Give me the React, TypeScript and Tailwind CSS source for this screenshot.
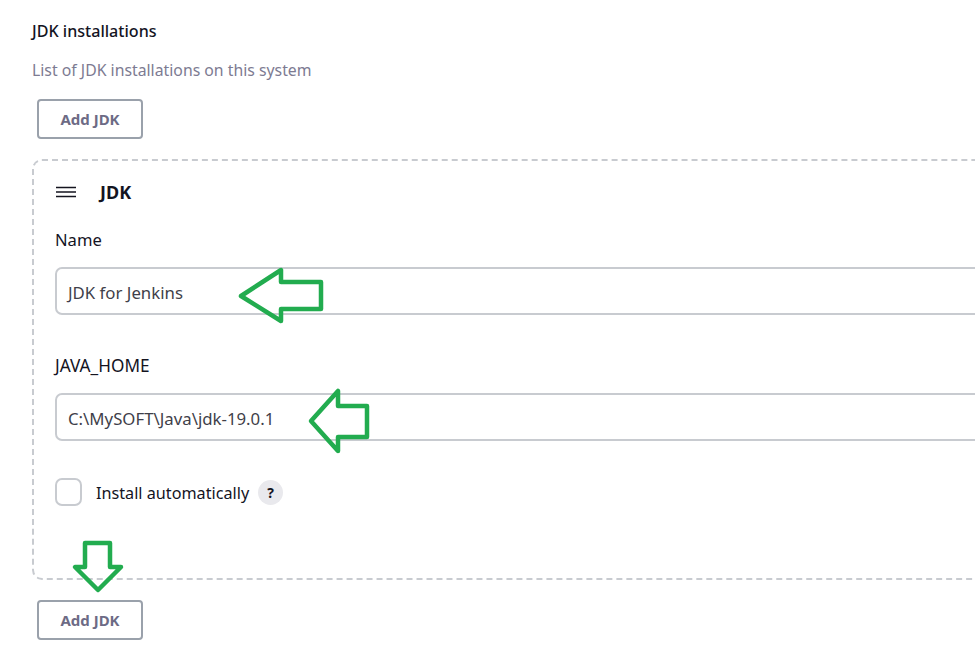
function AddButton() {
  return (
    <button className="ml-[5px] flex h-[40px] w-[106px] items-center justify-center rounded-[4px] border-2 border-[#9aa1ab] bg-white text-[15px] font-bold text-[#6d6b85]">
      Add JDK
    </button>
  );
}

function Field({ label, value, className, labelClass }: { label: string; value: string; className: string; labelClass: string }) {
  return (
    <div className={className}>
      <div className={labelClass}>{label}</div>
      <div className="mt-[15px] flex h-[48px] w-[1000px] items-center rounded-[7px] border-2 border-[#c8cbd0] bg-white pl-[11px] pt-[3px] text-[16.8px] text-[#3f3f4a]">
        {value}
      </div>
    </div>
  );
}

function Arrows() {
  const common = { fill: "none", stroke: "#22ac4f", strokeWidth: 4.5, strokeLinejoin: "round" as const };
  return (
    <svg className="absolute left-0 top-0 h-[668px] w-[975px]" viewBox="0 0 975 668">
      <polygon {...common} points="241,296 281,270 281,282 321,282 321,309 281,309 281,321" />
      <polygon {...common} points="311,421 338,391 338,406 367,406 367,437 338,437 338,451" />
      <polygon {...common} points="85,543 110,543 110,567 121,567 98,590 75,567 85,567" />
    </svg>
  );
}

export default function App() {
  return (
    <div className="relative h-[668px] w-[975px] overflow-hidden bg-white pl-[32px] pt-[19px] font-['Noto_Sans','Open_Sans',sans-serif]">
      <div className="h-[24px] text-[16.1px] font-medium leading-[24px] text-[#14141f]">JDK installations</div>
      <div className="mt-[15px] h-[24px] text-[15.8px] leading-[24px] text-[#7d7b92]">List of JDK installations on this system</div>
      <div className="mt-[17px]">
        <AddButton />
      </div>
      <div className="mt-[20px] h-[421px] w-[1000px] rounded-[10px] border-2 border-dashed border-[#c8cbd0] pl-[21px] pt-[19px]">
        <div className="flex h-[24px] items-center">
          <svg width="20" height="12" viewBox="0 0 20 12" className="ml-[1px]">
            <path d="M0 1.5H20M0 6H20M0 10.5H20" stroke="#14141f" strokeWidth="1.7" />
          </svg>
          <span className="ml-[24px] text-[18px] font-bold text-[#14141f]">JDK</span>
        </div>
        <Field label="Name" value="JDK for Jenkins" className="mt-[24px]" labelClass="h-[24px] text-[16.6px] leading-[24px] text-[#14141f]" />
        <Field label="JAVA_HOME" value="C:\MySOFT\Java\jdk-19.0.1" className="mt-[39px]" labelClass="h-[24px] text-[17.2px] leading-[24px] text-[#14141f]" />
        <div className="mt-[37px] flex h-[28px] items-center">
          <div className="h-[28px] w-[27px] rounded-[7px] border-2 border-[#c8cbd0] bg-white" />
          <span className="ml-[14px] pt-[2px] text-[16.2px] text-[#14141f]">Install automatically</span>
          <span className="ml-[9px] flex h-[25px] w-[25px] items-center justify-center rounded-full bg-[#e9e9ed] text-[14px] font-bold text-[#14141f]">?</span>
        </div>
      </div>
      <div className="mt-[20px]">
        <AddButton />
      </div>
      <Arrows />
    </div>
  );
}
